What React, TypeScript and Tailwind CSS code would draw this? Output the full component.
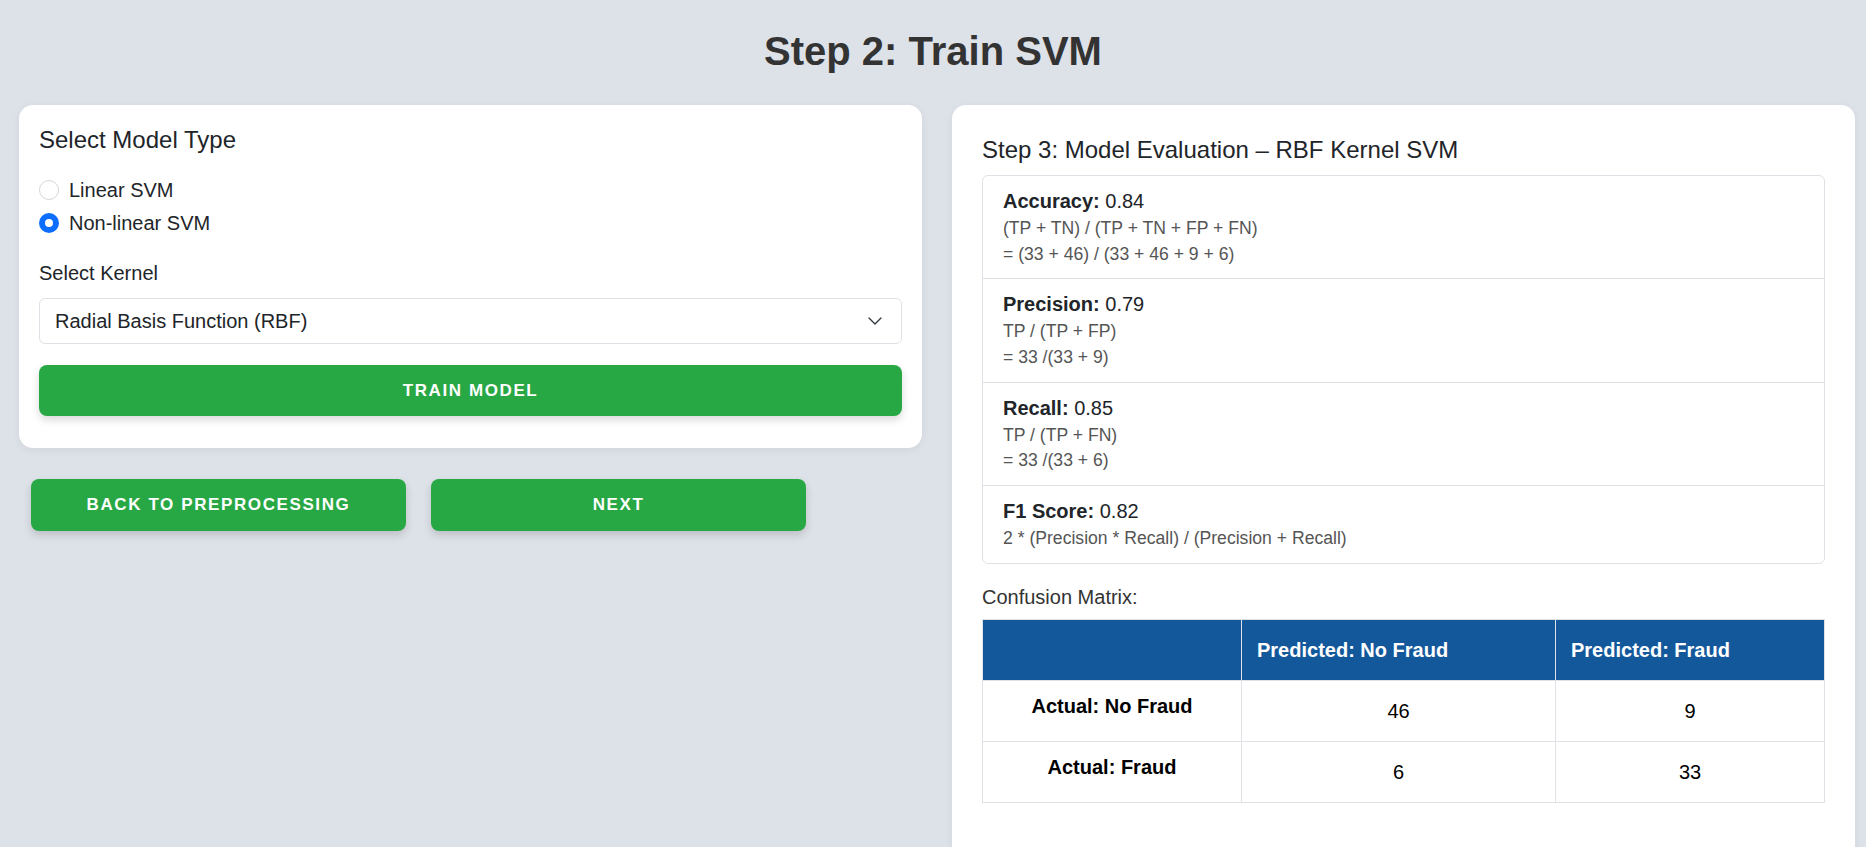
import React from "react";

function Radio({ checked, label }: { checked: boolean; label: string }) {
  return (
    <label className="flex items-center h-[30px] gap-[10px] text-[20px] text-[#212529] cursor-pointer">
      {checked ? (
        <span className="w-5 h-5 rounded-full bg-[#0d6efd] flex items-center justify-center">
          <span className="w-[8px] h-[8px] rounded-full bg-white" />
        </span>
      ) : (
        <span className="w-5 h-5 rounded-full border border-[#d6d6d6] bg-white" />
      )}
      <span>{label}</span>
    </label>
  );
}

function Metric({
  name,
  value,
  lines,
  last,
}: {
  name: string;
  value: string;
  lines: string[];
  last?: boolean;
}) {
  return (
    <div className={`px-5 py-[11px] ${last ? "" : "border-b border-[#dee2e6]"}`}>
      <div className="text-[20px] leading-[29px] text-[#212529]">
        <span className="font-bold">{name}</span> {value}
      </div>
      {lines.map((l) => (
        <div key={l} className="text-[17.6px] leading-[25.7px] text-[#555]">
          {l}
        </div>
      ))}
    </div>
  );
}

export default function App() {
  return (
    <div
      className="h-[847px] overflow-hidden bg-[#dde1e8]"
      style={{ fontFamily: '"Liberation Sans", Arial, sans-serif' }}
    >
      <h1 className="pt-[27px] text-[40px] leading-[48px] font-bold text-center text-[#333]">
        Step 2: Train SVM
      </h1>

      <div className="mt-[30px] flex items-start gap-[30px] pl-[19px]">
        {/* Left column */}
        <div className="w-[903px] flex flex-col">
          <div className="bg-white rounded-[14px] shadow-[0_2px_8px_rgba(0,0,0,0.06)] px-5 pt-[21px] pb-[32px]">
            <h4 className="text-[24px] leading-[28.8px] text-[#212529]">Select Model Type</h4>
            <div className="mt-5 flex flex-col gap-[3px]">
              <Radio checked={false} label="Linear SVM" />
              <Radio checked={true} label="Non-linear SVM" />
            </div>
            <div className="mt-5 text-[20px] leading-[30px] text-[#212529]">Select Kernel</div>
            <div className="mt-[10px] h-[46px] border border-[#dee2e6] rounded-[6px] bg-white flex items-center justify-between pl-[15px] pr-[19px]">
              <span className="text-[20px] text-[#212529]">Radial Basis Function (RBF)</span>
              <svg width="14" height="8" viewBox="0 0 14 8" fill="none">
                <polyline
                  points="1,1 7,7 13,1"
                  stroke="#343a40"
                  strokeWidth="1.4"
                  strokeLinecap="round"
                  strokeLinejoin="round"
                />
              </svg>
            </div>
            <button className="mt-[21px] h-[51px] w-full rounded-[8px] bg-[#28a745] text-white font-bold text-[17px] tracking-[1.6px] shadow-[0_4px_8px_rgba(0,0,0,0.15)]">
              TRAIN MODEL
            </button>
          </div>

          <div className="mt-[31px] flex gap-[25px] pl-[12px]">
            <button className="w-[375px] h-[52px] rounded-[8px] bg-[#28a745] text-white font-bold text-[17px] tracking-[1.6px] shadow-[0_4px_8px_rgba(0,0,0,0.15)]">
              BACK TO PREPROCESSING
            </button>
            <button className="w-[375px] h-[52px] rounded-[8px] bg-[#28a745] text-white font-bold text-[17px] tracking-[1.6px] shadow-[0_4px_8px_rgba(0,0,0,0.15)]">
              NEXT
            </button>
          </div>
        </div>

        {/* Right column */}
        <div className="w-[903px] bg-white rounded-[14px] shadow-[0_2px_8px_rgba(0,0,0,0.06)] px-[30px] pt-[31px] pb-[80px]">
          <h3 className="text-[24px] leading-[28.8px] text-[#212529]">
            Step 3: Model Evaluation – RBF Kernel SVM
          </h3>
          <div className="mt-[10px] border border-[#dee2e6] rounded-[6px]">
            <Metric
              name="Accuracy:"
              value="0.84"
              lines={["(TP + TN) / (TP + TN + FP + FN)", "= (33 + 46) / (33 + 46 + 9 + 6)"]}
            />
            <Metric name="Precision:" value="0.79" lines={["TP / (TP + FP)", "= 33 /(33 + 9)"]} />
            <Metric name="Recall:" value="0.85" lines={["TP / (TP + FN)", "= 33 /(33 + 6)"]} />
            <Metric
              name="F1 Score:"
              value="0.82"
              lines={["2 * (Precision * Recall) / (Precision + Recall)"]}
              last
            />
          </div>

          <div className="mt-[21px] mb-[10px] text-[20px] leading-[24px] text-[#333]">Confusion Matrix:</div>

          <table className="w-full border-collapse text-[20px] leading-[30px]">
            <thead>
              <tr>
                <th className="w-[259px] bg-[#14589c] border border-[#dee2e6] px-[15px] py-[15px]"></th>
                <th className="w-[314px] bg-[#14589c] border border-[#dee2e6] px-[15px] py-[15px] text-left font-bold text-white">
                  Predicted: No Fraud
                </th>
                <th className="bg-[#14589c] border border-[#dee2e6] px-[15px] py-[15px] text-left font-bold text-white">
                  Predicted: Fraud
                </th>
              </tr>
            </thead>
            <tbody className="text-black">
              <tr>
                <th className="border border-[#dee2e6] px-[15px] pt-[10px] pb-[20px] align-top text-center font-bold">
                  Actual: No Fraud
                </th>
                <td className="border border-[#dee2e6] px-[15px] py-[15px] text-center align-middle">46</td>
                <td className="border border-[#dee2e6] px-[15px] py-[15px] text-center align-middle">9</td>
              </tr>
              <tr>
                <th className="border border-[#dee2e6] px-[15px] pt-[10px] pb-[20px] align-top text-center font-bold">
                  Actual: Fraud
                </th>
                <td className="border border-[#dee2e6] px-[15px] py-[15px] text-center align-middle">6</td>
                <td className="border border-[#dee2e6] px-[15px] py-[15px] text-center align-middle">33</td>
              </tr>
            </tbody>
          </table>
        </div>
      </div>
    </div>
  );
}
